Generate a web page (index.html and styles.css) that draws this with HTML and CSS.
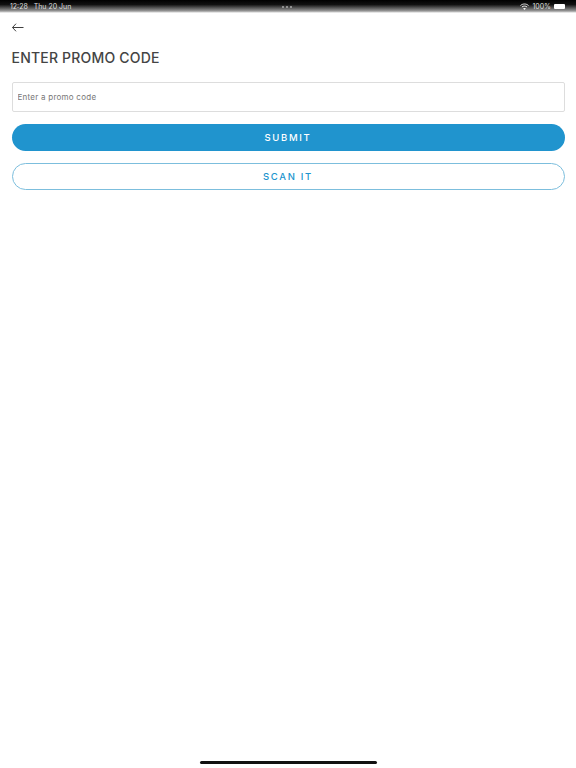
FILE: index.html
```html
<!DOCTYPE html>
<html lang="en">
<head>
    <meta charset="UTF-8">
    <meta name="viewport" content="width=device-width, initial-scale=1.0">
    <title>Enter promo code</title>
    <link rel="stylesheet" href="styles.css">
</head>
<body>
    <div class="status-bar">
        <div class="status-time">12:28&nbsp;&nbsp; Thu 20 Jun</div>
        <div class="status-dots">
            <span class="status-dot"></span>
            <span class="status-dot"></span>
            <span class="status-dot"></span>
        </div>
        <div class="status-right">
            <svg class="wifi" width="9" height="7" viewBox="0 0 18 14">
                <path d="M1 5 C5.500 1 12.500 1 17 5 M3.800 8 C6.800 5.500 11.200 5.500 14.200 8" fill="none" stroke="#eee" stroke-width="2"/>
                <path d="M9 14 L6.300 10.800 C8 9.600 10 9.600 11.700 10.800 Z" fill="#eee"/>
            </svg>
            <span>100%</span>
            <span class="battery"></span>
        </div>
    </div>

    <div class="content">
        <button class="back" aria-label="Back">
            <svg width="12" height="9" viewBox="0 0 12 9">
                <path d="M11.500 4.500 H0.500 M4 0.700 L0.500 4.500 L4 8.300" fill="none" stroke="#3f3f3f" stroke-width="1"/>
            </svg>
        </button>

        <h1>ENTER PROMO CODE</h1>

        <input class="promo-input" type="text" placeholder="Enter a promo code">

        <button class="btn btn-solid">SUBMIT</button>
        <button class="btn btn-outline">SCAN IT</button>
    </div>

    <div class="home-indicator"></div>
</body>
</html>
```

FILE: styles.css
```css
html, body {
    height: 100%;
}
body {
    margin: 0;
    background-color: #fff;
    font-family: "Inter", "Liberation Sans", sans-serif;
    color: #444;
    display: flex;
    flex-direction: column;
}
.status-bar {
    height: 13px;
    flex-shrink: 0;
    padding: 0 11px 0 10px;
    display: flex;
    justify-content: space-between;
    background: linear-gradient(#000 0, #111 35%, #999 85%, #fff 100%);
    color: #ddd;
    font-size: 7px;
    line-height: 13px;
    position: relative;
}
.status-dots {
    position: absolute;
    left: 282px;
    top: 6px;
    display: flex;
    gap: 2px;
}
.status-dot {
    width: 2px;
    height: 2px;
    border-radius: 50%;
    background-color: #aaa;
}
.status-right {
    display: flex;
    align-items: center;
    gap: 3px;
}
.battery {
    width: 11px;
    height: 5px;
    background-color: #fff;
    border-radius: 1px;
}
.content {
    flex: 1;
    padding: 8px 11.500px 0;
    display: flex;
    flex-direction: column;
}
.back {
    align-self: flex-start;
    width: 12px;
    height: 12px;
    padding: 0;
    border: none;
    background: none;
    display: flex;
    align-items: center;
}
h1 {
    margin: 16px 0 0;
    font-size: 14px;
    line-height: 18px;
    font-weight: 500;
    letter-spacing: 0.200px;
    color: #444;
}
.promo-input {
    margin-top: 15px;
    height: 30px;
    box-sizing: border-box;
    padding: 0 5px;
    border: 1px solid #ddd;
    border-radius: 2px;
    font-family: inherit;
    font-size: 8px;
    letter-spacing: 0.250px;
    color: #777;
}
.promo-input::placeholder {
    color: #777;
    opacity: 1;
}
.btn {
    box-sizing: border-box;
    border-radius: 14px;
    font-family: inherit;
    font-size: 9.500px;
    font-weight: 500;
    letter-spacing: 1.700px;
    padding: 0;
}
.btn-solid {
    height: 27px;
    margin-top: 12px;
    background-color: #2094ce;
    border: none;
    color: #fff;
}
.btn-outline {
    height: 27px;
    margin-top: 11.500px;
    background-color: #fff;
    border: 1px solid #7cbedd;
    color: #2094ce;
}
.home-indicator {
    width: 177px;
    height: 3px;
    flex-shrink: 0;
    margin: 0 auto 4.500px;
    border-radius: 2px;
    background-color: #111;
}
```
